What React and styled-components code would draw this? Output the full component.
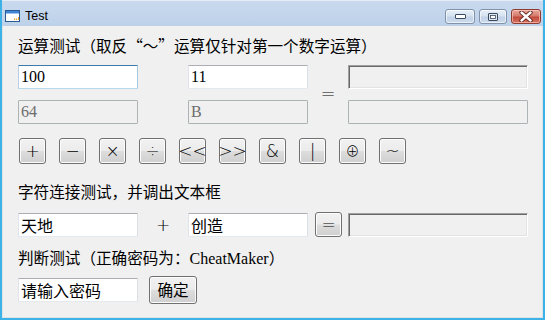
import styled, { createGlobalStyle } from 'styled-components';

const GlobalStyle = createGlobalStyle`
  html, body {
    margin: 0;
    padding: 0;
    background: #3cb2e6;
  }
  * { box-sizing: border-box; }
`;

const CJK = `"Noto Sans CJK SC", sans-serif`;
const FIELD = `"Liberation Serif", "Noto Sans CJK SC", serif`;
const SYMBOL = `"DejaVu Sans", "Noto Sans CJK SC", sans-serif`;

function WindowIcon() {
  return (
    <svg width="15" height="12" viewBox="0 0 15 12">
      <rect x="0.5" y="0.5" width="14" height="11" fill="#fff" stroke="#2a5b96" />
      <rect x="1" y="1" width="13" height="2.5" fill="#3f86d6" />
      <rect x="9" y="8.5" width="1.2" height="1.5" fill="#f3a42d" />
      <rect x="11" y="8.5" width="1.2" height="1.5" fill="#f3a42d" />
      <rect x="13" y="7" width="1" height="3" fill="#f3a42d" />
    </svg>
  );
}

function MinIcon() {
  return (
    <svg width="11" height="5" viewBox="0 0 11 5">
      <rect x="0.5" y="0.5" width="10" height="4" rx="0.5" fill="#fff" stroke="#3c4a5c" />
    </svg>
  );
}

function MaxIcon() {
  return (
    <svg width="10" height="8" viewBox="0 0 10 8">
      <rect x="0.5" y="0.5" width="9" height="7" rx="0.5" fill="#dde7f2" stroke="#3c4a5c" />
      <rect x="2.5" y="2.5" width="5" height="3" fill="#fff" stroke="#3c4a5c" strokeWidth="0.8" />
    </svg>
  );
}

function CloseIcon() {
  return (
    <svg width="14" height="11" viewBox="0 0 14 11">
      <path d="M2.5 1.5 L11.5 9.5 M11.5 1.5 L2.5 9.5" stroke="#5a1c15" strokeWidth="4.2" strokeLinecap="round" />
      <path d="M2.5 1.5 L11.5 9.5 M11.5 1.5 L2.5 9.5" stroke="#fff" strokeWidth="2.4" strokeLinecap="round" />
    </svg>
  );
}

const OPERATORS = ['+', '−', '×', '÷', '<<', '>>', '&', '|', '⊕', '~'];

export default function App() {
  return (
    <>
      <GlobalStyle />
      <Window>
        <TitleBar>
          <WindowIcon />
          <Title>Test</Title>
          <CaptionButtons>
            <CaptionButton $w={30}><MinIcon /></CaptionButton>
            <CaptionButton $w={28}><MaxIcon /></CaptionButton>
            <CaptionButton $w={30} $close><CloseIcon /></CaptionButton>
          </CaptionButtons>
        </TitleBar>
        <Body>
          <Heading>运算测试（取反“～”运算仅针对第一个数字运算）</Heading>
          <CalcGrid>
            <TextBox $area="a" $focused defaultValue="100" />
            <TextBox $area="b" defaultValue="11" />
            <EqualSign>=</EqualSign>
            <SunkenBox $area="r" />
            <TextBox $area="c" disabled defaultValue="64" />
            <TextBox $area="d" disabled defaultValue="B" />
            <TextBox $area="s" disabled defaultValue="" />
          </CalcGrid>
          <ButtonRow>
            {OPERATORS.map((op) => (
              <OpButton key={op} $small={op === '⊕'}>{op}</OpButton>
            ))}
          </ButtonRow>

          <Heading $top={17}>字符连接测试，并调出文本框</Heading>
          <Row $top={11}>
            <TextBox $w={120} defaultValue="天地" />
            <PlusSign>+</PlusSign>
            <TextBox $w={120} defaultValue="创造" />
            <SmallButton $gap={7}>=</SmallButton>
            <SunkenBox $w={180} $gap={6} />
          </Row>

          <Heading $top={10}>
            判断测试（正确密码为：<Latin>CheatMaker</Latin>）
          </Heading>
          <Row $top={9}>
            <TextBox $w={120} defaultValue="请输入密码" />
            <OkButton>确定</OkButton>
          </Row>
        </Body>
      </Window>
    </>
  );
}

const Window = styled.div`
  width: 545px;
  height: 320px;
  display: flex;
  flex-direction: column;
  border: 2px solid #3cb2e6;
  border-top: 0;
  background: #c3d6ec;
`;

const TitleBar = styled.div`
  height: 26px;
  display: flex;
  align-items: flex-start;
  padding: 9px 2px 0 3px;
  background: linear-gradient(180deg, #c9daee 0%, #bdd1e9 100%);
  border-top: 1px solid #e4edf7;
`;

const Title = styled.span`
  margin-left: 5px;
  margin-top: -2px;
  font: 12.5px "Liberation Sans", Arial, sans-serif;
  color: #000;
  line-height: 16px;
`;

const CaptionButtons = styled.div`
  margin-left: auto;
  margin-top: -1px;
  display: flex;
  gap: 4px;
`;

const CaptionButton = styled.div`
  width: ${({ $w }) => $w}px;
  height: 15px;
  display: flex;
  align-items: center;
  justify-content: center;
  border-radius: 3px;
  border: 1px solid ${({ $close }) => ($close ? '#8e3a30' : '#8193ab')};
  background: ${({ $close }) =>
    $close
      ? 'linear-gradient(180deg, #e9a99c 0%, #d47a6b 45%, #c24b3c 55%, #d5735f 100%)'
      : 'linear-gradient(180deg, #e9f0f9 0%, #d6e2f0 45%, #c3d3e8 55%, #ccdaec 100%)'};
  box-shadow: inset 0 0 0 1px ${({ $close }) => ($close ? 'rgba(255,210,200,0.6)' : 'rgba(255,255,255,0.6)')};
`;

const Body = styled.div`
  flex: 1;
  background: #f0f0f0;
  border: 1px solid #dfe3e8;
  border-top: 0;
  padding: 9px 0 0 15px;
  display: flex;
  flex-direction: column;
  align-items: flex-start;
`;

const Heading = styled.div`
  margin-top: ${({ $top }) => $top || 0}px;
  height: 20px;
  line-height: 20px;
  font-size: 15.6px;
  font-family: ${CJK};
  color: #000;
  white-space: nowrap;
`;

const Latin = styled.span`
  font-family: "Liberation Serif", serif;
  font-size: 16px;
`;

const CalcGrid = styled.div`
  margin-top: 10px;
  display: grid;
  grid-template-columns: 120px 50px 120px 40px 180px;
  grid-template-rows: 24px 24px;
  row-gap: 11px;
  grid-template-areas:
    "a . b eq r"
    "c . d eq s";
`;

const TextBox = styled.input.attrs({ readOnly: true })`
  grid-area: ${({ $area }) => $area || 'auto'};
  width: ${({ $w }) => ($w ? `${$w}px` : '100%')};
  height: 24px;
  margin: 0;
  padding: 0 2px;
  font-family: ${FIELD};
  font-size: 16px;
  color: #000;
  background: #fff;
  outline: none;
  border: 1px solid;
  border-radius: 1px;
  border-color: #abadb3 #dbdfe6 #e3e9ef #e2e3ea;

  ${({ $focused }) =>
    $focused &&
    `
    border-color: #3d7bad #a4c9e3 #b7d9ed #b5cfe7;
  `}

  &:disabled {
    background: #f0f0f0;
    color: #6d6d6d;
    border-color: #adb2b5;
    -webkit-text-fill-color: #6d6d6d;
  }
`;

const SunkenBox = styled.div`
  grid-area: ${({ $area }) => $area || 'auto'};
  width: ${({ $w }) => ($w ? `${$w}px` : '100%')};
  height: 24px;
  margin-left: ${({ $gap }) => $gap || 0}px;
  background: #f0f0f0;
  border: 1px solid;
  border-color: #a0a0a0 #ffffff #ffffff #a0a0a0;
  box-shadow: inset 1px 1px 0 #696969, inset -1px -1px 0 #e3e3e3;
`;

const EqualSign = styled.div`
  grid-area: eq;
  display: flex;
  align-items: center;
  justify-content: center;
  padding-bottom: 3px;
  font: 200 18px ${SYMBOL};
  color: #000;
`;

const ButtonRow = styled.div`
  margin-top: 14px;
  margin-left: 1px;
  display: flex;
  gap: 13px;
`;

const PushButton = styled.button`
  margin: 0;
  padding: 0;
  display: flex;
  align-items: center;
  justify-content: center;
  color: #000;
  border: 1px solid #707070;
  border-radius: 3px;
  background: linear-gradient(180deg, #f2f2f2 0%, #ebebeb 48%, #dddddd 52%, #cfcfcf 100%);
  box-shadow: inset 0 0 0 1px #fcfcfc;
`;

const OpButton = styled(PushButton)`
  width: 27px;
  height: 26px;
  font-family: ${SYMBOL};
  font-size: ${({ $small }) => ($small ? 14 : 17)}px;
  font-weight: 200;
  line-height: 1;
`;

const Row = styled.div`
  margin-top: ${({ $top }) => $top || 0}px;
  display: flex;
  align-items: center;
`;

const PlusSign = styled.div`
  width: 50px;
  text-align: center;
  font: 200 17px ${SYMBOL};
  color: #000;
`;

const SmallButton = styled(PushButton)`
  margin-left: ${({ $gap }) => $gap || 0}px;
  width: 27px;
  height: 25px;
  font: 200 17px ${SYMBOL};
`;

const OkButton = styled(PushButton)`
  margin-left: 11px;
  width: 48px;
  height: 28px;
  font-family: ${CJK};
  font-size: 15.6px;
  line-height: 1;
`;
